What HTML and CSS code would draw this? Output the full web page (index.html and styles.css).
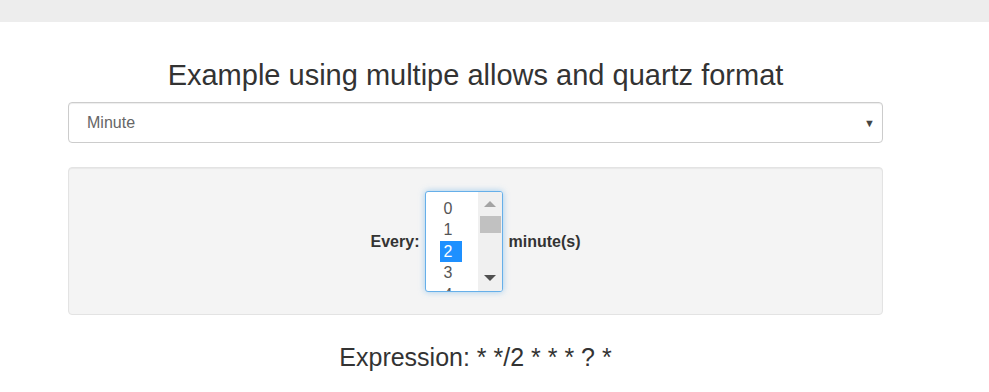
FILE: index.html
```html
<!DOCTYPE html>
<html lang="en">
<head>
    <meta charset="UTF-8">
    <title>Cron generator</title>
    <link rel="stylesheet" href="styles.css">
</head>
<body>
    <div class="topbar"></div>
    <div class="container">
        <h3 class="title">Example using multipe allows and quartz format</h3>
        <div class="select-box">
            <span>Minute</span>
            <span class="caret">&#9660;</span>
        </div>
        <div class="well">
            <label>Every:</label>
            <div class="listbox">
                <div class="options">
                    <div class="opt">0</div>
                    <div class="opt">1</div>
                    <div class="opt"><span class="selected">2</span></div>
                    <div class="opt">3</div>
                    <div class="opt">4</div>
                </div>
                <div class="scrollbar">
                    <span class="arrow-up"></span>
                    <span class="thumb"></span>
                    <span class="arrow-down"></span>
                </div>
            </div>
            <label>minute(s)</label>
        </div>
        <h3 class="expression">Expression: * */2 * * * ? *</h3>
    </div>
</body>
</html>
```

FILE: styles.css
```css
body {
    margin: 0;
    font-family: "Liberation Sans", Arial, sans-serif;
    font-size: 14px;
    color: #333;
    background: #fff;
}

.topbar {
    height: 22px;
    background-color: #ededed;
}

.container {
    width: 815px;
    margin-left: 68px;
}

.title {
    font-size: 29px;
    font-weight: normal;
    text-align: center;
    margin: 37px 0 11px;
    line-height: 32px;
}

.select-box {
    height: 39px;
    border: 1px solid #ccc;
    border-radius: 4px;
    display: flex;
    align-items: center;
    justify-content: space-between;
    padding: 0 7px 0 18px;
    font-size: 16px;
    color: #666;
    box-shadow: inset 0 1px 1px rgba(0,0,0,.075);
}

.caret {
    font-size: 11px;
    color: #444;
}

.well {
    margin-top: 24px;
    height: 146px;
    background-color: #f4f4f4;
    border: 1px solid #e3e3e3;
    border-radius: 4px;
    display: flex;
    align-items: center;
    justify-content: center;
    box-shadow: inset 0 1px 1px rgba(0,0,0,.05);
}

.well label {
    font-size: 16px;
    font-weight: bold;
    margin-top: 2px;
}

.listbox {
    width: 76px;
    height: 99px;
    margin: 0 5px 0 6px;
    border: 1px solid #66afe9;
    border-radius: 3px;
    box-shadow: 0 0 6px rgba(102,175,233,.6);
    background: #fff;
    display: flex;
    overflow: hidden;
}

.options {
    flex: 1;
    padding: 6px 0 0 17px;
    font-size: 16px;
    line-height: 21.5px;
    color: #555;
}

.selected {
    display: inline-block;
    width: 19px;
    padding-left: 3px;
    margin-left: -3px;
    background: #1e90ff;
    color: #fff;
}

.scrollbar {
    width: 24px;
    background: #f0f0f0;
    display: flex;
    flex-direction: column;
    align-items: center;
}

.arrow-up {
    margin-top: 9px;
    border-left: 6px solid transparent;
    border-right: 6px solid transparent;
    border-bottom: 6px solid #a3a3a3;
}

.thumb {
    margin-top: 9px;
    width: 21px;
    height: 17px;
    background: #c1c1c1;
}

.arrow-down {
    margin-top: auto;
    margin-bottom: 10px;
    border-left: 6px solid transparent;
    border-right: 6px solid transparent;
    border-top: 6px solid #505050;
}

.expression {
    font-size: 25px;
    font-weight: normal;
    text-align: center;
    margin: 27px 0 0;
    line-height: 30px;
}
```
